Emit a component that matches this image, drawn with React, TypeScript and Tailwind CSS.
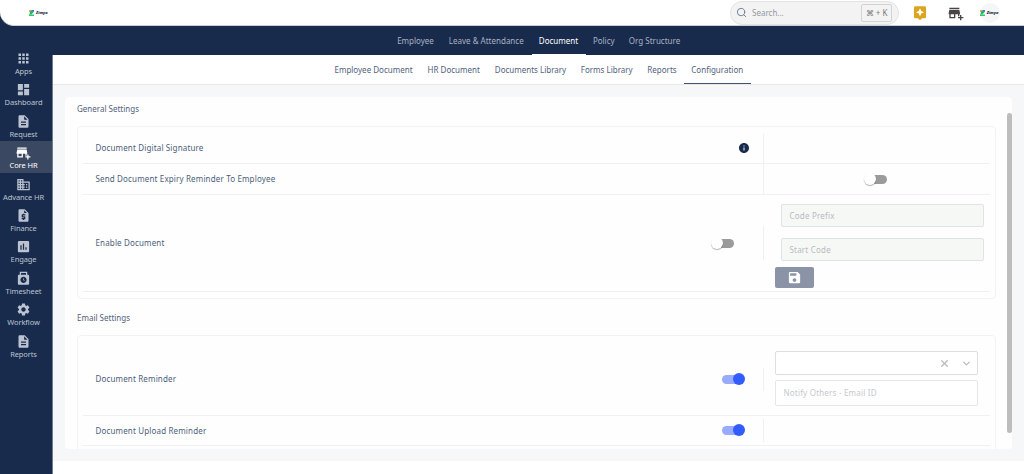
import clsx from 'clsx';
import type { ReactNode } from 'react';
import type { IconType } from 'react-icons';
import {
  MdAddBusiness,
  MdApps,
  MdAssessment,
  MdAssistant,
  MdDashboard,
  MdDescription,
  MdDomain,
  MdInfo,
  MdPunchClock,
  MdRequestQuote,
  MdSave,
  MdSettings,
} from 'react-icons/md';
import { ChevronDown, Search, X } from 'lucide-react';

const sideItems: { label: string; icon: IconType; active?: boolean }[] = [
  { label: 'Apps', icon: MdApps },
  { label: 'Dashboard', icon: MdDashboard },
  { label: 'Request', icon: MdDescription },
  { label: 'Core HR', icon: MdAddBusiness, active: true },
  { label: 'Advance HR', icon: MdDomain },
  { label: 'Finance', icon: MdRequestQuote },
  { label: 'Engage', icon: MdAssessment },
  { label: 'Timesheet', icon: MdPunchClock },
  { label: 'Workflow', icon: MdSettings },
  { label: 'Reports', icon: MdDescription },
];

const mainTabs = [
  { label: 'Employee', width: 'w-[51px]' },
  { label: 'Leave & Attendance', width: 'w-[90.5px]' },
  { label: 'Document', width: 'w-[54px]' },
  { label: 'Policy', width: 'w-[36.5px]' },
  { label: 'Org Structure', width: 'w-[65px]' },
];

const subTabs = [
  { label: 'Employee Document', width: 'w-[93px]' },
  { label: 'HR Document', width: 'w-[67.5px]' },
  { label: 'Documents Library', width: 'w-[86px]' },
  { label: 'Forms Library', width: 'w-[66.5px]' },
  { label: 'Reports', width: 'w-[44px]' },
  { label: 'Configuration', width: 'w-[66.5px]' },
];

function Logo({ className }: { className?: string }) {
  return (
    <div className={clsx('flex items-center', className)}>
      <svg viewBox="0 0 10 12" className="h-[6px] w-[5px]">
        <path d="M0 0h10v3L6 6H2z" fill="#2f7fe0" />
        <path d="M0 0h5v3H0z" fill="#f0a63a" />
        <path d="M4 3h6L5 9H0z" fill="#1fbf5c" />
        <path d="M0 9h10v3H0z" fill="#35c46c" />
      </svg>
      <span className="ml-[2px] text-[4px] leading-none font-extrabold text-[#1c2438] italic">Zimyo</span>
    </div>
  );
}

function Toggle({ on }: { on?: boolean }) {
  return (
    <div className="relative h-[13px] w-[23px]">
      <div
        className={clsx(
          'absolute top-[2px] h-[9px] w-[20px] rounded-full',
          on ? 'left-0 bg-[#98abff]' : 'left-[3px] bg-[#9b9b9b]',
        )}
      />
      <div
        className={clsx(
          'absolute top-0 size-[12px] rounded-full',
          on ? 'right-0 bg-[#335cff]' : 'left-0 bg-white shadow-[0_1px_1px_rgba(0,0,0,0.3)]',
        )}
      />
    </div>
  );
}

interface RowProps {
  label: string;
  height: string;
  divider: string;
  control?: ReactNode;
  controlPad?: string;
  children?: ReactNode;
}

function Row({ label, height, divider, control, controlPad, children }: RowProps) {
  return (
    <div className={clsx('flex items-center border-b border-[#eff0f2]', height)}>
      <div className={clsx('flex w-[680px] items-center justify-between pl-[12.5px]', controlPad)}>
        <span className="text-[8px] tracking-[0.15px] text-[#4c5e7a]">{label}</span>
        {control}
      </div>
      <div className={clsx('w-px bg-[#eff0f2]', divider)} />
      <div className="h-full w-[226px]">{children}</div>
    </div>
  );
}

function Header() {
  return (
    <header className="flex h-[26px] items-center rounded-bl-[14px] border-b border-[#c9d0d6] bg-white">
      <Logo className="ml-[29px]" />
      <div className="mr-[24px] ml-auto flex items-center">
        <div className="flex h-[24px] w-[169px] items-center rounded-full border border-[#e2e3e4] bg-[#f3f3f4] pr-[6px] pl-[5px]">
          <Search className="size-[11px] text-[#68778d]" strokeWidth={2} />
          <span className="ml-[5px] text-[8px] text-[#9298a3]">Search...</span>
          <span className="ml-auto flex h-[18px] w-[31px] items-center justify-center rounded-[2px] border border-[#d3d3d3] text-[8px] text-[#777]">
            ⌘ + K
          </span>
        </div>
        <MdAssistant className="ml-[13px] size-[16px] text-[#dca51f]" />
        <MdAddBusiness className="ml-[20px] size-[16px] text-[#4a4447]" />
        <div className="ml-[16px] flex size-[20px] items-center justify-center rounded-full bg-[#f5f6f6]">
          <Logo className="-ml-[2px]" />
        </div>
      </div>
    </header>
  );
}

function Sidebar() {
  return (
    <aside className="w-[53px] shrink-0 pt-[21px] shadow-[inset_-1px_0_0_#6f7b92]">
      {sideItems.map((item) => (
        <div
          key={item.label}
          className={clsx(
            'flex h-[31.4px] w-[52px] flex-col items-center pt-[4px]',
            item.active ? 'bg-[#3a4961] text-white' : 'text-[#bcc3d0]',
          )}
        >
          <item.icon className="-ml-[5px] size-[15px] shrink-0" />
          <span className="-ml-[5px] text-[7.5px] leading-[10px] tracking-[-0.1px] whitespace-nowrap">
            {item.label}
          </span>
        </div>
      ))}
    </aside>
  );
}

export default function App() {
  return (
    <div className="flex h-[474px] w-[1024px] flex-col overflow-hidden bg-[#182b4d] font-['Noto_Sans',sans-serif]">
      <Header />
      <div className="flex min-h-0 flex-1">
        <Sidebar />
        <div className="-ml-px flex w-[972px] flex-col">
          <nav className="flex h-[29px] bg-[#182b4d] pl-[338px]">
            {mainTabs.map((tab) => (
              <div
                key={tab.label}
                className={clsx(
                  'flex items-center justify-center border-b pt-[1px] text-[8px] whitespace-nowrap',
                  tab.width,
                  tab.label === 'Document' ? 'border-white text-white' : 'border-transparent text-[#aab2c1]',
                )}
              >
                {tab.label}
              </div>
            ))}
          </nav>

          <nav className="ml-px flex h-[30px] border-b border-[#e7e8eb] bg-white pl-[274px]">
            {subTabs.map((tab) => (
              <div
                key={tab.label}
                className={clsx(
                  'flex items-center justify-center border-b pt-[2px] text-[8px] whitespace-nowrap text-[#52627c]',
                  tab.width,
                  tab.label === 'Configuration' ? 'border-[#40517a]' : 'border-transparent',
                )}
              >
                {tab.label}
              </div>
            ))}
          </nav>

          <main className="ml-px h-[376px] bg-[#f6f7f9] pt-[12px] pl-[12px]">
            <div className="relative h-[352px] w-[947px] overflow-hidden rounded-[4px] bg-[#fefefe] pr-[16px] pl-[12px]">
              <h2 className="h-[29px] pt-[6px] text-[8px] leading-[12px] text-[#52627c]">General Settings</h2>
              <section className="h-[173px] rounded-[4px] border border-[#f1f2f4] px-[5px] pt-[7px]">
                <Row
                  label="Document Digital Signature"
                  height="h-[30px]"
                  divider="h-full"
                  controlPad="pr-[13px] pb-[1px]"
                  control={<MdInfo className="size-[12px] text-[#182b4d]" />}
                />
                <Row label="Send Document Expiry Reminder To Employee" height="h-[31px]" divider="h-full">
                  <div className="flex h-full items-center pl-[100px]">
                    <Toggle />
                  </div>
                </Row>
                <Row
                  label="Enable Document"
                  height="h-[97px]"
                  divider="h-[34px]"
                  controlPad="pr-[29px]"
                  control={<Toggle />}
                >
                  <div className="flex h-full flex-col pt-[9px] pl-[11px]">
                    <div className="ml-[6px] flex h-[23px] w-[203px] shrink-0 items-center rounded-[2px] border border-[#e0e3e3] bg-[#f6f8f6] pl-[7.5px] text-[8px] tracking-[0.2px] text-[#b7bbc0]">
                      Code Prefix
                    </div>
                    <div className="mt-[11px] ml-[6px] flex h-[23px] w-[203px] shrink-0 items-center rounded-[2px] border border-[#e0e3e3] bg-[#f6f8f6] pl-[7.5px] text-[8px] tracking-[0.2px] text-[#b7bbc0]">
                      Start Code
                    </div>
                    <button className="mt-[6px] flex h-[21px] w-[39px] shrink-0 items-center justify-center rounded-[2px] bg-[#8b94a6] text-white">
                      <MdSave className="size-[15px]" />
                    </button>
                  </div>
                </Row>
              </section>

              <h2 className="h-[36px] pt-[13px] text-[8px] leading-[12px] text-[#52627c]">Email Settings</h2>
              <section className="h-[173px] rounded-[4px] border border-[#f1f2f4] px-[5px] pt-[7px]">
                <Row
                  label="Document Reminder"
                  height="h-[73px]"
                  divider="h-[23px]"
                  controlPad="pr-[18px]"
                  control={<Toggle on />}
                >
                  <div className="flex h-full flex-col pt-[8px] pl-[11px]">
                    <div className="flex h-[24px] w-[203px] items-center rounded-[2px] border border-[#dcdee0] bg-white pr-[5px] text-[#b9bcc0]">
                      <X className="ml-auto size-[11px]" strokeWidth={3} />
                      <ChevronDown className="ml-[11px] size-[11px]" strokeWidth={3} />
                    </div>
                    <div className="mt-[5px] flex h-[26px] w-[203px] items-center rounded-[2px] border border-[#e5e6e8] bg-white pl-[7.5px] text-[8px] tracking-[0.2px] text-[#c5c8cc]">
                      Notify Others - Email ID
                    </div>
                  </div>
                </Row>
                <Row
                  label="Document Upload Reminder"
                  height="h-[30px]"
                  divider="h-[23px]"
                  controlPad="pr-[18px]"
                  control={<Toggle on />}
                />
              </section>

              {/* scrollbar thumb */}
              <div className="absolute top-[16px] right-0 h-[320px] w-[5px] rounded-full bg-[#bdbdbd]" />
            </div>
          </main>
          <div className="ml-px flex-1 bg-white" />
        </div>
      </div>
    </div>
  );
}
